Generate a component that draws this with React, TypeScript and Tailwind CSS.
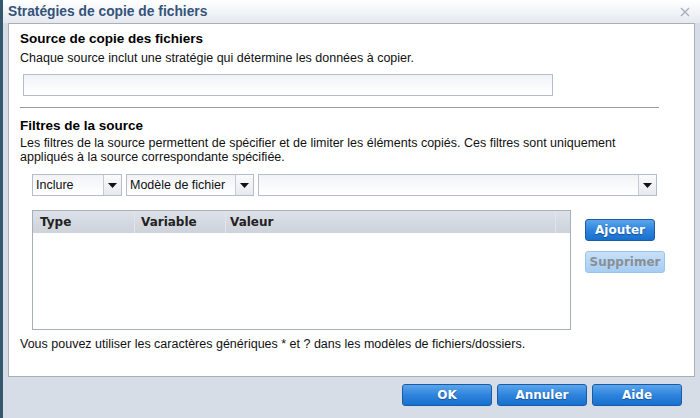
const bodyFont = "font-['Liberation_Sans',Arial,sans-serif]";
const boldFont = "font-['DejaVu_Sans',Verdana,sans-serif]";

const Arrow = () => (
  <svg width="9" height="5" viewBox="0 0 9 5">
    <path d="M0 0 H9 L4.5 5 Z" fill="#111" />
  </svg>
);

const Select = ({ label, width }: { label?: string; width: string }) => (
  <div className={`flex h-[22px] ${width} border border-[#b5bccb] bg-white`}>
    <div className="flex flex-1 items-center bg-gradient-to-b from-[#f1f3f7] to-white px-[3px] text-[12.5px] text-[#111]">
      {label}
    </div>
    <div className="flex w-[18px] items-center justify-center border-l border-[#c4cad6] bg-gradient-to-b from-[#fafbfc] to-[#e6e9ee]">
      <Arrow />
    </div>
  </div>
);

const BlueButton = ({ label, width, disabled }: { label: string; width: string; disabled?: boolean }) => (
  <button
    className={`flex h-[22px] ${width} items-center justify-center rounded-[3px] border text-[12px] font-bold ${boldFont} ${
      disabled
        ? "border-[#9cc4ea] bg-gradient-to-b from-[#c7e0f8] to-[#a6cdf2] text-[#8a8f96]"
        : "border-[#1a5ca3] bg-gradient-to-b from-[#5aa5ec] via-[#2e84dc] to-[#1770cf] text-white [text-shadow:0_1px_1px_rgba(0,40,100,0.5)]"
    }`}
  >
    {label}
  </button>
);

export default function App() {
  return (
    <div className={`flex h-[418px] w-[700px] overflow-hidden bg-[#d6dde6] ${bodyFont}`}>
      <div className="w-[3px] bg-[#35596c]" />
      <div className="flex flex-1 flex-col">
        <div className="flex h-[23px] items-center justify-between bg-gradient-to-b from-white to-[#e4e9f0] pl-[5px] pr-[10px] pt-px">
          <span className="text-[13.8px] font-bold text-[#34537a]">Stratégies de copie de fichiers</span>
          <svg width="10" height="10" viewBox="0 0 10 10">
            <path d="M1 1 L9 9 M9 1 L1 9" stroke="#a9afb8" strokeWidth="1.4" />
          </svg>
        </div>
        <div className="ml-[5px] mr-[5px] flex h-[354px] flex-col border border-[#a9afb9] bg-white pl-[11px] pt-[7px]">
          <h2 className="text-[13.5px] font-bold leading-[16px] text-black">Source de copie des fichiers</h2>
          <p className="mt-[4px] text-[12.5px] leading-[14px] text-[#111]">
            Chaque source inclut une stratégie qui détermine les données à copier.
          </p>
          <div className="ml-[3px] mt-[9px] h-[22px] w-[530px] border border-[#b5bccb] bg-gradient-to-b from-[#f1f3f7] to-white" />
          <div className="mt-[11px] h-px w-[639px] bg-[#9a9a9a]" />
          <h2 className="mt-[10px] text-[13.5px] font-bold leading-[16px] text-black">Filtres de la source</h2>
          <p className="mt-[2px] text-[12.5px] leading-[14px] text-[#111]">
            Les filtres de la source permettent de spécifier et de limiter les éléments copiés. Ces filtres sont uniquement
            <br />
            appliqués à la source correspondante spécifiée.
          </p>
          <div className="ml-[12px] mt-[10px] flex gap-[4px]">
            <Select label="Inclure" width="w-[90px]" />
            <Select label="Modèle de fichier" width="w-[128px]" />
            <Select width="w-[399px]" />
          </div>
          <div className="ml-[12px] mt-[14px] flex gap-[14px]">
            <div className="flex h-[120px] w-[539px] flex-col border border-[#a9afb9]">
              <div className={`flex h-[22px] bg-gradient-to-b from-[#dde1e8] to-[#cdd2db] text-[12px] font-bold text-[#222] ${boldFont}`}>
                <div className="flex w-[102px] items-center border-r border-[#e2e5ea] pl-[7px]">Type</div>
                <div className="flex w-[91px] items-center border-r border-[#e2e5ea] pl-[6px]">Variable</div>
                <div className="flex w-[330px] items-center border-r border-[#e2e5ea] pl-[4px]">Valeur</div>
                <div className="flex-1" />
              </div>
            </div>
            <div className="mt-[9px] flex flex-col gap-[10px]">
              <BlueButton label="Ajouter" width="w-[70px]" />
              <BlueButton label="Supprimer" width="w-[80px]" disabled />
            </div>
          </div>
          <p className="mt-[7px] text-[12.5px] leading-[14px] text-[#111]">
            Vous pouvez utiliser les caractères génériques * et ? dans les modèles de fichiers/dossiers.
          </p>
        </div>
        <div className="flex justify-end gap-[5px] pr-[18px] pt-[7px]">
          <BlueButton label="OK" width="w-[90px]" />
          <BlueButton label="Annuler" width="w-[90px]" />
          <BlueButton label="Aide" width="w-[90px]" />
        </div>
      </div>
    </div>
  );
}
